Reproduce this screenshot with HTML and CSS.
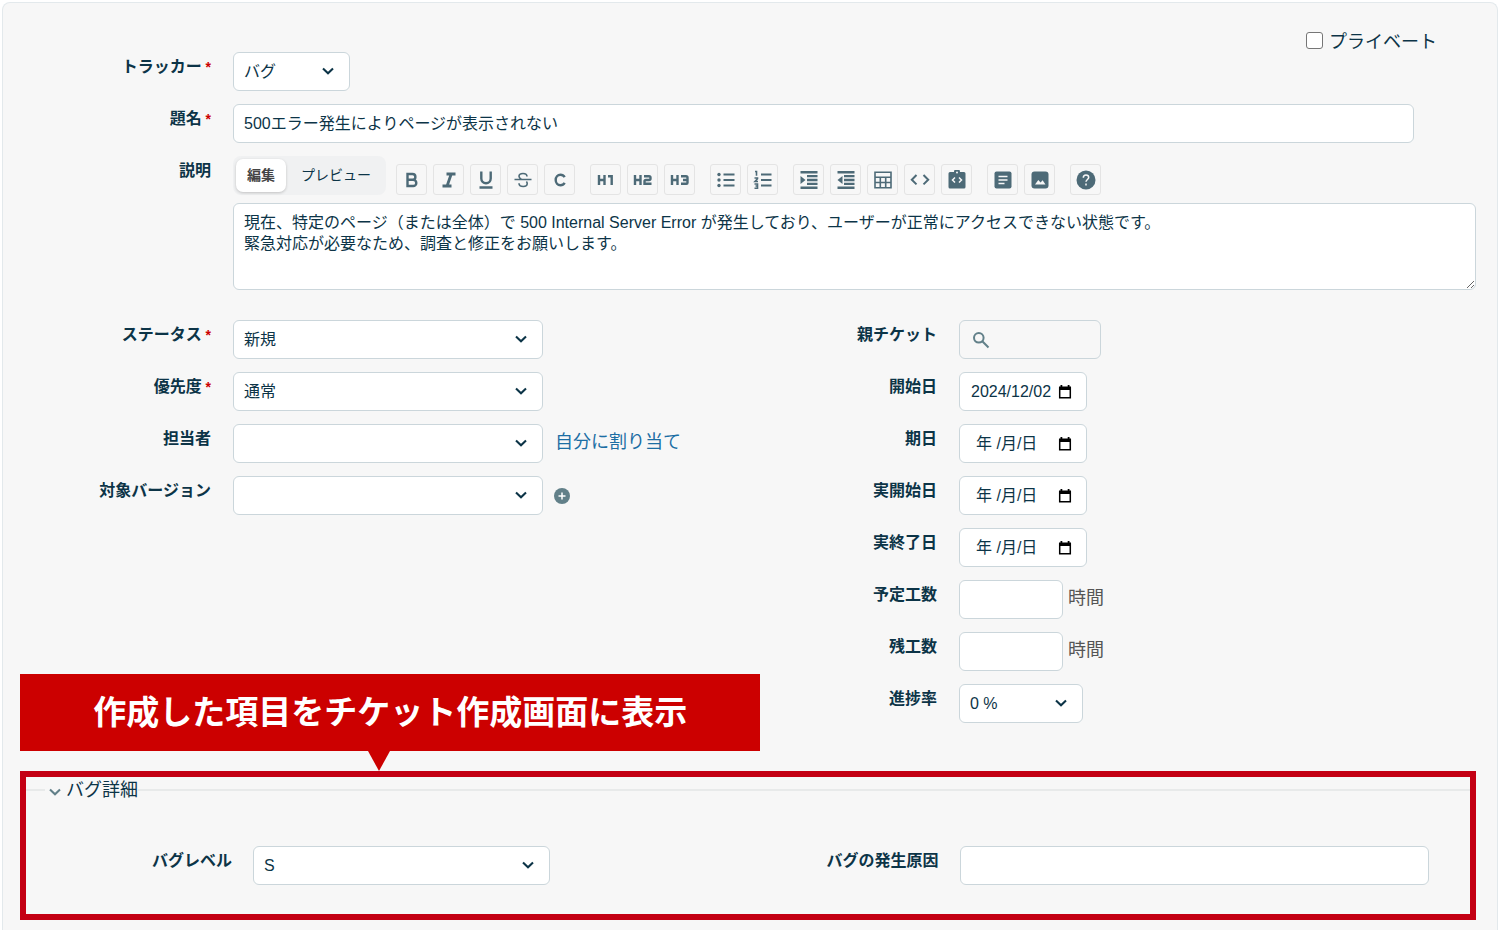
FILE: index.html
```html
<!DOCTYPE html>
<html lang="ja">
<head>
<meta charset="utf-8">
<title>新しいチケット</title>
<link rel="stylesheet" href="styles.css">
</head>
<body>
<svg class="symbols" aria-hidden="true">
  <symbol id="chevron" viewBox="0 0 12 8"><path d="M1 1.500 6 6.200l5-4.700" fill="none" stroke="currentColor" stroke-width="2.100"/></symbol>
  <symbol id="calendar" viewBox="0 0 14 14"><path d="M1.700 3h10.600v9.800H1.700z" fill="none" stroke="currentColor" stroke-width="1.500"/><path d="M1 1.500h12V5H1zM2.500 0h1.800v2H2.500zM9.700 0h1.800v2H9.700z" fill="currentColor"/></symbol>
</svg>
<form class="panel">
  <div class="top">
    <div class="field top-tracker">
      <label for="tracker">トラッカー<span class="required"> *</span></label>
      <div class="control"><span class="select select-short"><select id="tracker"><option>バグ</option></select><svg><use href="#chevron"/></svg></span></div>
    </div>
    <label class="private"><input type="checkbox">プライベート</label>
  </div>
  <div class="field">
    <label for="subject">題名<span class="required"> *</span></label>
    <div class="control"><input class="box subject" id="subject" type="text" value="500エラー発生によりページが表示されない"></div>
  </div>
  <div class="field">
    <label for="description">説明</label>
    <div class="editor">
      <div class="toolbar">
        <div class="tabs"><button type="button" class="tab tab-active">編集</button><button type="button" class="tab">プレビュー</button></div>
        <div class="tools">
          <div class="group">
            <button type="button" aria-label="太字"><svg viewBox="0 0 20 20"><path d="M5.500 4h5a2.900 2.900 0 0 1 0 5.800h-5zM5.500 9.800h5.700a3.100 3.100 0 0 1 0 6.200H5.500z" class="line bold"/></svg></button>
            <button type="button" aria-label="斜体"><svg viewBox="0 0 20 20"><path d="M7.500 4h9M3.500 16h9M12.200 4 8.100 16" class="line heavy"/></svg></button>
            <button type="button" aria-label="下線"><svg viewBox="0 0 20 20"><path d="M5.300 1.500v7a4.700 4.700 0 0 0 9.400 0v-7M3.500 17.500h13" class="line bold"/></svg></button>
            <button type="button" aria-label="取り消し線"><svg viewBox="0 0 20 20"><path d="M1.500 9.500h17M14 6.500c0-2-1.800-3-4-3s-4 1-4 2.800c0 1.600 1.200 2.500 2.500 3.200M6 13.200c0 2 1.800 3.300 4.200 3.300 2.300 0 4-1.200 4-3 0-.8-.3-1.400-.8-2" class="line medium"/></svg></button>
            <button type="button" aria-label="コード"><svg viewBox="0 0 20 20"><path d="M14.700 7.200A4.900 4.900 0 0 0 10.500 4.800C7.600 4.800 5.700 7 5.700 10s1.900 5.200 4.800 5.200a4.900 4.900 0 0 0 4.200-2.400" class="line bold"/></svg></button>
          </div>
          <div class="group">
            <button type="button" aria-label="見出し1"><svg viewBox="0 0 20 20"><path d="M3 5v10M8.500 5v10M3 10h5.500M12 6.200h3.700V15" class="line bold"/></svg></button>
            <button type="button" aria-label="見出し2"><svg viewBox="0 0 20 20"><path d="M2 5v10M7.500 5v10M2 10h5.500M11 6.200h5a1.500 1.500 0 0 1 1.500 1.500v.8A1.500 1.500 0 0 1 16 10h-3a1.500 1.500 0 0 0-1.500 1.500v2.300h7" class="line bold"/></svg></button>
            <button type="button" aria-label="見出し3"><svg viewBox="0 0 20 20"><path d="M2 5v10M7.500 5v10M2 10h5.500M11 6.200h5a1.500 1.500 0 0 1 1.500 1.500v5a1 1 0 0 1-1 1H11M13 10h4" class="line bold"/></svg></button>
          </div>
          <div class="group">
            <button type="button" aria-label="箇条書き"><svg viewBox="0 0 20 20"><path d="M7.500 4.500H18.500M7.500 10H18.500M7.500 15.500H18.500" class="line"/><g class="solid"><circle cx="3" cy="4.500" r="1.700"/><circle cx="3" cy="10" r="1.700"/><circle cx="3" cy="15.500" r="1.700"/></g></svg></button>
            <button type="button" aria-label="番号付きリスト"><svg viewBox="0 0 20 20"><path d="M8 4.500h10.500M8 10h10.500M8 15.500h10.500" class="line"/><path d="M2 1.500h1.500v4.300M1.500 8h3v.8L2 11.500h3M1.500 14h3v4.300h-3M2.500 16h2" class="line medium"/></svg></button>
          </div>
          <div class="group">
            <button type="button" aria-label="引用"><svg viewBox="0 0 20 20"><path d="M1.500 2.200h17M8 6.100h10.500M8 10h10.500M8 13.900h10.500M1.500 17.800h17" class="line bold"/><path d="M1.500 6v8l5-4z" class="solid"/></svg></button>
            <button type="button" aria-label="引用解除"><svg viewBox="0 0 20 20"><path d="M1.500 2.200h17M8 6.100h10.500M8 10h10.500M8 13.900h10.500M1.500 17.800h17" class="line bold"/><path d="M6.500 6v8l-5-4z" class="solid"/></svg></button>
            <button type="button" aria-label="表"><svg viewBox="0 0 20 20"><path d="M2 2.300h16v15.400H2zM2 7.200h16M2 12.500h16M7.300 7.200v10.500M12.700 7.200v10.500" class="line medium"/></svg></button>
            <button type="button" aria-label="コードブロック"><svg viewBox="0 0 20 20"><path d="M6.500 5 1.800 9.700l4.700 4.700M13.500 5l4.700 4.700-4.700 4.700" class="line"/></svg></button>
            <button type="button" aria-label="コード貼り付け"><svg viewBox="0 0 20 20"><path d="M3 2h4a3 3 0 0 1 6 0h4a1.500 1.500 0 0 1 1.500 1.500v13.500a1.500 1.500 0 0 1-1.500 1.500H3A1.500 1.500 0 0 1 1.500 17V3.500A1.500 1.500 0 0 1 3 2z" class="solid"/><circle cx="10" cy="2.500" r="1" class="cut"/><path d="M8 7.500 5.500 10 8 12.500M12 7.500l2.500 2.500-2.500 2.500" class="cut-line"/></svg></button>
          </div>
          <div class="group">
            <button type="button" aria-label="Wikiリンク"><svg viewBox="0 0 20 20"><rect x="1.500" y="1.500" width="17" height="17" rx="2" class="solid"/><path d="M5.500 6.500h9M5.500 10h9M5.500 13.500h6" class="cut-line"/></svg></button>
            <button type="button" aria-label="画像"><svg viewBox="0 0 20 20"><rect x="1.500" y="1.500" width="17" height="17" rx="3" class="solid"/><path d="m5 14.500 3.300-4.500 2.300 2.600 2-2.300 2.900 4.200z" class="cut"/></svg></button>
          </div>
          <div class="group">
            <button type="button" aria-label="ヘルプ"><svg viewBox="0 0 20 20"><circle cx="10" cy="10" r="9.500" class="solid"/><path d="M7.300 7.800C7.300 6 8.500 5 10 5s2.700 1 2.700 2.500c0 1.800-2.700 2.200-2.700 4.200M10 13.600v2" class="cut-line"/></svg></button>
          </div>
        </div>
      </div>
      <textarea class="box" id="description">現在、特定のページ（または全体）で 500 Internal Server Error が発生しており、ユーザーが正常にアクセスできない状態です。
緊急対応が必要なため、調査と修正をお願いします。</textarea>
    </div>
  </div>

  <div class="attributes">
    <div class="column">
      <div class="field">
        <label for="status">ステータス<span class="required"> *</span></label>
        <div class="control"><span class="select select-long"><select id="status"><option>新規</option></select><svg><use href="#chevron"/></svg></span></div>
      </div>
      <div class="field">
        <label for="priority">優先度<span class="required"> *</span></label>
        <div class="control"><span class="select select-long"><select id="priority"><option>通常</option></select><svg><use href="#chevron"/></svg></span></div>
      </div>
      <div class="field">
        <label for="assignee">担当者</label>
        <div class="control"><span class="select select-long"><select id="assignee"><option></option></select><svg><use href="#chevron"/></svg></span><a class="assign" href="#assignee">自分に割り当て</a></div>
      </div>
      <div class="field">
        <label for="version">対象バージョン</label>
        <div class="control"><span class="select select-long"><select id="version"><option></option></select><svg><use href="#chevron"/></svg></span><button type="button" class="add" aria-label="新しいバージョン"><svg viewBox="0 0 16 16"><circle cx="8" cy="8" r="8"/><path d="M8 4.500v7M4.500 8h7"/></svg></button></div>
      </div>
    </div>
    <div class="column">
      <div class="field">
        <label for="parent">親チケット</label>
        <div class="control"><span class="box search"><svg viewBox="0 0 18 18"><circle cx="6.800" cy="6.800" r="4.800"/><path d="m10.300 10.300 6.200 6.200"/></svg><input id="parent" type="text"></span></div>
      </div>
      <div class="field">
        <label for="start">開始日</label>
        <div class="control"><span class="box date"><input id="start" type="text" value="2024/12/02"><button type="button" aria-label="開始日を選択"><svg><use href="#calendar"/></svg></button></span></div>
      </div>
      <div class="field">
        <label for="due">期日</label>
        <div class="control"><span class="box date date-empty"><input id="due" type="text" placeholder="年 /月/日"><button type="button" aria-label="期日を選択"><svg><use href="#calendar"/></svg></button></span></div>
      </div>
      <div class="field">
        <label for="actual-start">実開始日</label>
        <div class="control"><span class="box date date-empty"><input id="actual-start" type="text" placeholder="年 /月/日"><button type="button" aria-label="実開始日を選択"><svg><use href="#calendar"/></svg></button></span></div>
      </div>
      <div class="field">
        <label for="actual-end">実終了日</label>
        <div class="control"><span class="box date date-empty"><input id="actual-end" type="text" placeholder="年 /月/日"><button type="button" aria-label="実終了日を選択"><svg><use href="#calendar"/></svg></button></span></div>
      </div>
      <div class="field">
        <label for="estimate">予定工数</label>
        <div class="control"><input class="box hours" id="estimate" type="text"><span class="unit">時間</span></div>
      </div>
      <div class="field">
        <label for="remaining">残工数</label>
        <div class="control"><input class="box hours" id="remaining" type="text"><span class="unit">時間</span></div>
      </div>
      <div class="field">
        <label for="progress">進捗率</label>
        <div class="control"><span class="select select-progress"><select id="progress"><option>0 %</option></select><svg><use href="#chevron"/></svg></span></div>
      </div>
    </div>
  </div>

  <div class="highlight">
    <p class="callout">作成した項目をチケット作成画面に表示</p>
    <fieldset>
      <legend><button type="button"><svg><use href="#chevron"/></svg>バグ詳細</button></legend>
      <div class="details">
        <div class="field">
          <label for="level">バグレベル</label>
          <div class="control"><span class="select select-level"><select id="level"><option>S</option></select><svg><use href="#chevron"/></svg></span></div>
        </div>
        <div class="field">
          <label for="cause">バグの発生原因</label>
          <div class="control"><input class="box cause" id="cause" type="text"></div>
        </div>
      </div>
    </fieldset>
  </div>
</form>
</body>
</html>
```
FILE: styles.css
```css
* { box-sizing: border-box; }

body {
  margin: 0;
  padding: 2px 2px 0;
  background: #fff;
  color: #0c3447;
  font: 16px/21px "Liberation Sans", "Noto Sans CJK JP", sans-serif;
}

button, input, select, textarea { font: inherit; color: inherit; }
button { padding: 0; border: 0; background: none; cursor: pointer; }

.symbols { position: absolute; width: 0; height: 0; }

.panel {
  display: flex;
  flex-direction: column;
  gap: 13px;
  min-height: calc(100vh - 2px);
  padding: 24px 21px 9px 17px;
  border: 1px solid #e3e9ec;
  border-bottom: 0;
  border-radius: 8px 8px 0 0;
  background: #f7f7f7;
}

.top { display: flex; align-items: flex-start; justify-content: space-between; }
.top-tracker { margin-top: 25px; }
.private { display: flex; align-items: center; gap: 6px; margin-right: 39px; font-size: 18px; line-height: 30px; }
.private input {
  appearance: none;
  width: 17px;
  height: 17px;
  margin: 0 0 3px;
  border: 1px solid #767676;
  border-radius: 3px;
  background: #fff;
}

.field { display: grid; grid-template-columns: 191px minmax(0, 1fr); column-gap: 22px; align-items: start; }
.field > label { font-weight: 700; line-height: 30px; text-align: right; white-space: nowrap; }
.required { color: #c00; font-size: 14px; }
.control { display: flex; align-items: center; min-height: 39px; }

.box, .select select {
  height: 39px;
  padding: 0 11px;
  border: 1px solid #cbd6db;
  border-radius: 6px;
  background: #fff;
}
.subject { width: 95%; padding: 0 10px 3px; }

.select { position: relative; display: flex; max-width: 100%; }
.select select { appearance: none; width: 100%; padding: 0 40px 0 10px; }
.select svg { position: absolute; right: 16px; top: 15px; width: 12px; height: 8px; pointer-events: none; }
.select-short { width: 117px; }
.select-long { width: 310px; }
.select-progress { width: 124px; }
.select-level { width: 62%; }

.editor { display: flex; flex-direction: column; gap: 8px; }
.toolbar { display: flex; align-items: flex-end; gap: 10px; }
.tabs { display: flex; padding: 3px; border-radius: 8px; background: #f0f1f2; }
.tab { height: 33px; padding: 0 12px 0 15px; border-radius: 7px; font-size: 14px; white-space: nowrap; }
.tab-active { padding: 0 11px; background: #fff; box-shadow: 0 1px 3px #0003; color: #444; font-weight: 700; }
.tools { display: flex; gap: 15px; }
.group { display: flex; gap: 6px; }
.group button {
  display: grid;
  place-items: center;
  width: 31px;
  height: 31px;
  border: 1px solid #e4e4e4;
  border-radius: 3px;
  color: #4d6a77;
}
.group svg { width: 20px; height: 20px; }
.line { fill: none; stroke: currentColor; stroke-width: 2; }
.bold { stroke-width: 2.4; }
.heavy { stroke-width: 2.8; }
.medium { stroke-width: 1.6; }
.solid { fill: currentColor; }
.cut { fill: #f7f7f7; }
.cut-line { fill: none; stroke: #f7f7f7; stroke-width: 1.5; }
textarea.box { display: block; width: 100%; height: 87px; padding: 8px 10px; resize: vertical; }

.attributes { display: grid; grid-template-columns: 1fr 1fr; margin-top: 17px; padding-right: 4px; }
.column { display: flex; flex-direction: column; gap: 13px; }
.assign { margin-left: 12px; padding-bottom: 2px; color: #1c6ea4; font-size: 18px; text-decoration: none; }
.add { display: flex; margin-left: 11px; }
.add svg { width: 16px; height: 16px; fill: #628089; stroke: #fff; stroke-width: 1.5; }
.add circle { stroke: none; }

.search { display: flex; align-items: center; width: 142px; padding: 0 12px; background: #f7f7f7; }
.search svg { flex: none; width: 18px; height: 18px; fill: none; stroke: #628089; stroke-width: 2; }
.search input, .date input { flex: 1; min-width: 0; padding: 0; border: 0; background: none; }
.date { display: flex; align-items: center; gap: 3px; width: 128px; padding: 0 14px 0 11px; }
.date-empty { padding-left: 16px; }
.date input::placeholder { color: inherit; opacity: 1; }
.date button { display: flex; color: #000; }
.date svg { width: 14px; height: 14px; }
.hours { width: 104px; }
.unit { margin-left: 5px; padding-bottom: 2px; color: #555; font-size: 18px; }

.highlight { position: relative; margin: 35px 0 0; border: 6px solid #c40014; }
.callout {
  position: absolute;
  left: -6px;
  bottom: calc(100% + 26px);
  width: calc(51% + 4px);
  margin: 0;
  padding-bottom: 5px;
  background: #c00;
  color: #fff;
  font: 700 33px/72px "Noto Sans CJK JP", sans-serif;
  text-align: center;
  white-space: nowrap;
}
.callout::after {
  content: "";
  position: absolute;
  top: 100%;
  left: calc(50% - 22px);
  border: 11px solid transparent;
  border-top: 20px solid #c00;
  border-bottom: 0;
}
fieldset { min-width: 0; margin: 0; padding: 43px 31px 29px 0; border: 0; border-top: 2px solid #e8eaea; }
legend { margin-left: 19px; padding: 0 0 0 4px; }
legend button { display: flex; align-items: center; gap: 5px; font-size: 18px; line-height: 26px; }
legend svg { width: 12px; height: 8px; margin-top: 4px; color: #628089; }
.details { display: grid; grid-template-columns: 1fr 1fr; }
.details .field { grid-template-columns: 206px minmax(0, 1fr); column-gap: 21px; }
.cause { width: 98%; }
```
